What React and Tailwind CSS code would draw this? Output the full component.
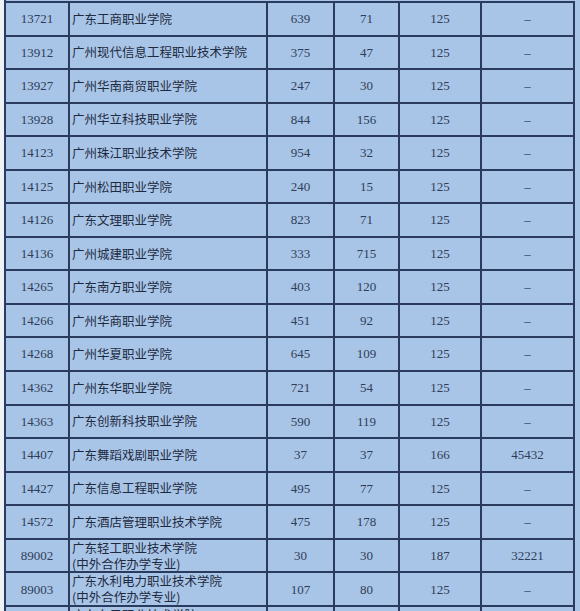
const rows = [
  ['13721', ['广东工商职业学院'], '639', '71', '125', '–'],
  ['13912', ['广州现代信息工程职业技术学院'], '375', '47', '125', '–'],
  ['13927', ['广州华南商贸职业学院'], '247', '30', '125', '–'],
  ['13928', ['广州华立科技职业学院'], '844', '156', '125', '–'],
  ['14123', ['广州珠江职业技术学院'], '954', '32', '125', '–'],
  ['14125', ['广州松田职业学院'], '240', '15', '125', '–'],
  ['14126', ['广东文理职业学院'], '823', '71', '125', '–'],
  ['14136', ['广州城建职业学院'], '333', '715', '125', '–'],
  ['14265', ['广东南方职业学院'], '403', '120', '125', '–'],
  ['14266', ['广州华商职业学院'], '451', '92', '125', '–'],
  ['14268', ['广州华夏职业学院'], '645', '109', '125', '–'],
  ['14362', ['广州东华职业学院'], '721', '54', '125', '–'],
  ['14363', ['广东创新科技职业学院'], '590', '119', '125', '–'],
  ['14407', ['广东舞蹈戏剧职业学院'], '37', '37', '166', '45432'],
  ['14427', ['广东信息工程职业学院'], '495', '77', '125', '–'],
  ['14572', ['广东酒店管理职业技术学院'], '475', '178', '125', '–'],
  ['89002', ['广东轻工职业技术学院', '(中外合作办学专业)'], '30', '30', '187', '32221'],
  ['89003', ['广东水利电力职业技术学院', '(中外合作办学专业)'], '107', '80', '125', '–'],
  ['89004', ['广东女子职业技术学院', '(中外合作办学专业)'], '60', '60', '125', '–'],
];

const num = "font-['Liberation_Serif',serif] text-[13px] text-[#2f3d57]";

const App = () => {
  return (
    <div className="w-[580px] h-[611px] overflow-hidden bg-[#a8c5e7] flex">
      {/* white strip on the left */}
      <div className="w-[4px] shrink-0 bg-[#eef1f5]" />

      <div className="flex flex-col pt-[1px] border-l-2 border-[#2a3b5e]">
        {rows.map(([code, name, a, b, c, d]) => (
          <div
            key={code}
            className="grid grid-cols-[64px_198px_67px_65px_82px_93px] h-[33.55px] shrink-0 border-t-2 border-[#2a3b5e]"
          >
            <div className={`flex items-center justify-center border-r-2 border-[#2a3b5e] ${num}`}>{code}</div>
            <div className="flex flex-col justify-center pl-[2px] border-r-2 border-[#2a3b5e] font-['Noto_Sans_CJK_SC',sans-serif] text-[12.5px] leading-[16px] text-[#1f2a3f]">
              {name.map((line) => (
                <span key={line} className="whitespace-nowrap">{line}</span>
              ))}
            </div>
            <div className={`flex items-center justify-center border-r-2 border-[#2a3b5e] ${num}`}>{a}</div>
            <div className={`flex items-center justify-center border-r-2 border-[#2a3b5e] ${num}`}>{b}</div>
            <div className={`flex items-center justify-center border-r-2 border-[#2a3b5e] ${num}`}>{c}</div>
            <div className={`flex items-center justify-center border-r-2 border-[#2a3b5e] ${num}`}>{d}</div>
          </div>
        ))}
      </div>
    </div>
  );
};

export default App;
